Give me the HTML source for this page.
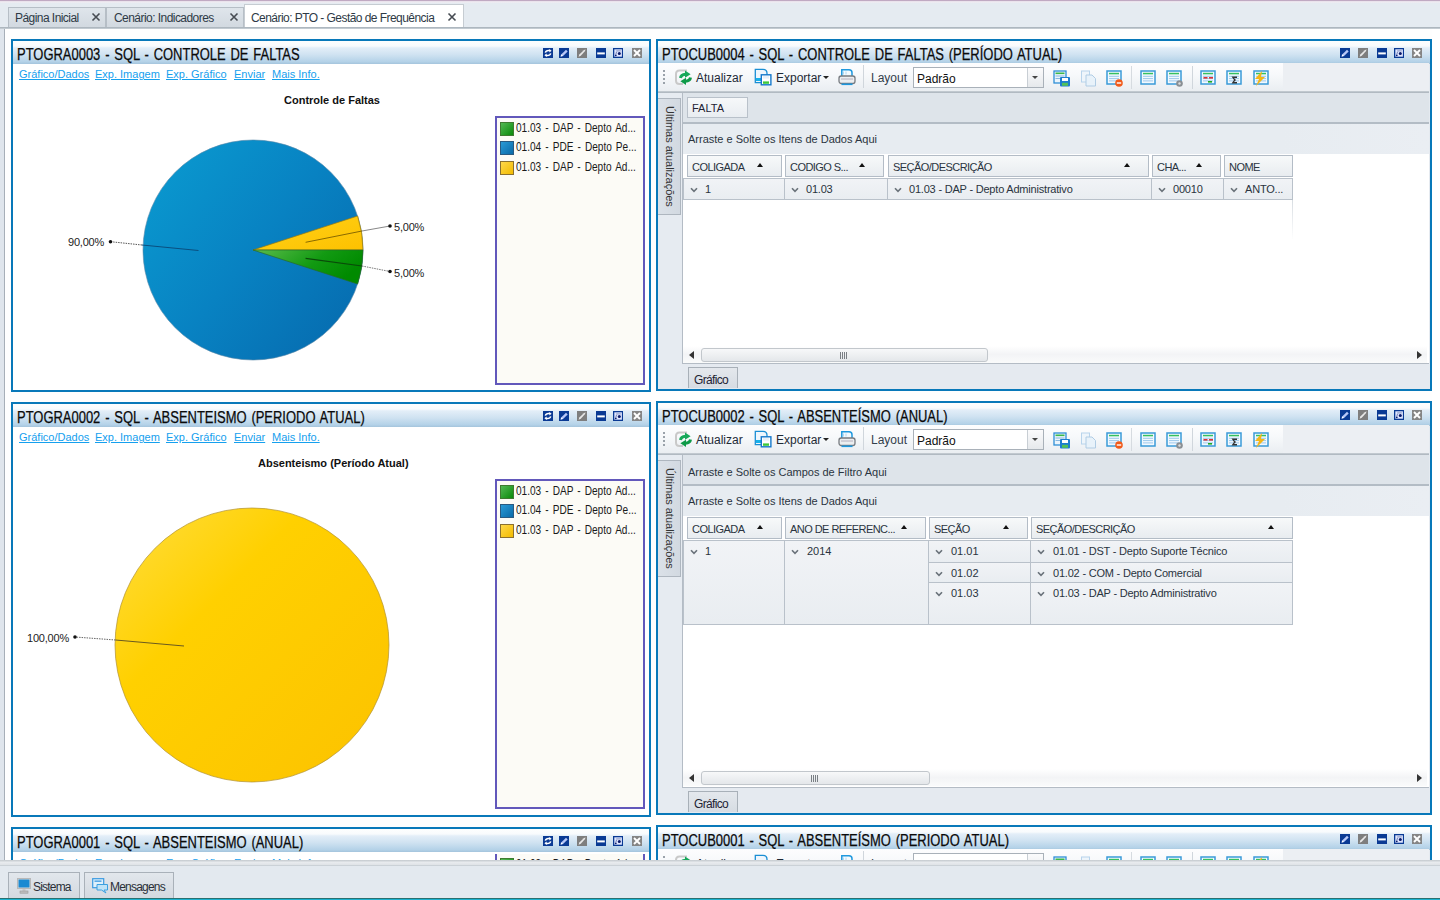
<!DOCTYPE html><html><head><meta charset="utf-8"><style>
*{margin:0;padding:0;box-sizing:border-box}
html,body{width:1440px;height:900px;overflow:hidden;background:#fff;font-family:"Liberation Sans",sans-serif;color:#222;position:relative}
.a{position:absolute}
.t{position:absolute;white-space:nowrap;line-height:1}
#topline{left:0;top:0;width:1440px;height:3px;background:linear-gradient(#c0a9c2 0,#c0a9c2 33%,#e9dfea 34%,#eef0f4 100%)}
#tabbar{left:0;top:3px;width:1440px;height:24px;background:#e5ebf1}
#tabline{left:0;top:27px;width:1440px;height:2px;background:linear-gradient(#a3adb6,#cdd4da)}
.tab{position:absolute;top:7px;height:20px;background:linear-gradient(#dfe5eb,#d2d9e0);border:1px solid #b6bec6;border-bottom:none}
.tabt{position:absolute;top:4px;font-size:12px;color:#2e3a46;letter-spacing:-0.55px;line-height:1;white-space:nowrap}
#lstrip{left:0;top:29px;width:5px;height:837px;background:#dfe5ec;border-right:1px solid #a7afb8}
#content{left:6px;top:29px;width:1426px;height:831px;background:#fefefe}
.pnl{position:absolute;border:2px solid #0878b9;background:#fff;overflow:hidden}
.ttl{position:absolute;left:0;top:0;right:0;height:23px;background:linear-gradient(#fdfefe 0%,#f8fbfd 22%,#e3eef8 30%,#cfe2f1 60%,#b4d2e8 90%,#a4c4dc 100%)}
.ttl .tx{position:absolute;left:4px;top:6px;font-size:16px;word-spacing:1.5px;transform:scaleX(0.81);transform-origin:0 0;color:#0a0a0a;-webkit-text-stroke:0.25px #0a0a0a;white-space:nowrap;line-height:1}
.lnk{position:absolute;font-size:11px;color:#15a0ee;text-decoration:underline;white-space:nowrap;line-height:1}
.lgt{position:absolute;font-size:12px;color:#1a1a1a;white-space:nowrap;line-height:1;word-spacing:1.5px;transform:scaleX(0.84);transform-origin:0 0}
.pct{position:absolute;font-size:11px;color:#222;white-space:nowrap;line-height:1;letter-spacing:-0.2px}
.ct{position:absolute;font-size:11px;font-weight:700;color:#111;white-space:nowrap;line-height:1}
#bline{left:0;top:860px;width:1440px;height:6px;background:linear-gradient(#c3c8cd,#e8ebee 40%,#dfe3e7 80%,#bdc5cc)}
#bbar{left:0;top:866px;width:1440px;height:32px;background:#e3e9ef}
#teal{left:0;top:898px;width:1440px;height:2px;background:linear-gradient(#2a7070 0,#2a7070 50%,#1cb2cf 50%)}
.btab{position:absolute;top:872px;height:26px;background:linear-gradient(#e2e7ec,#d3d9e0);border:1px solid #a9b1b9;border-bottom:none}
.btab .tt{position:absolute;top:8px;font-size:12px;color:#2a2f38;line-height:1;white-space:nowrap;letter-spacing:-0.8px}

.tbar{position:absolute;height:29px;background:linear-gradient(#fdfdfe 0%,#f7f9fb 40%,#e9edf1 100%)}
.tbt{position:absolute;font-size:12px;color:#1e2a36;white-space:nowrap;line-height:1}
.pvt{position:absolute;font-size:11px;color:#2a3440;white-space:nowrap;line-height:1}
.hcell{position:absolute;height:22px;border:1px solid #b3bcc6;background:linear-gradient(#f7f9fa,#e8ecf0)}
.rcell{position:absolute;border:1px solid #b9c1ca;background:linear-gradient(#f1f3f6,#e9edf1)}
.sarr{position:absolute;width:0;height:0;border-left:3.5px solid transparent;border-right:3.5px solid transparent;border-bottom:4px solid #111}
</style></head><body>
<div id="topline" class="a"></div><div id="tabbar" class="a"></div>
<div class="tab" style="left:8px;width:98px"><span class="tabt" style="left:6px">Página Inicial</span></div>
<div class="tab" style="left:106px;width:138px"><span class="tabt" style="left:7px">Cenário: Indicadores</span></div>
<div class="a" style="left:244px;top:4px;width:220px;height:25px;background:#fff;border:1px solid #c6ccd2;border-bottom:none"><span class="tabt" style="left:6px;top:7px">Cenário: PTO - Gestão de Frequência</span></div>
<svg class="a" style="left:91px;top:12px" width="10" height="10" viewBox="0 0 10 10"><path d="M1.5 1.5 L8.5 8.5 M8.5 1.5 L1.5 8.5" stroke="#464b52" stroke-width="1.6"/></svg><svg class="a" style="left:229px;top:12px" width="10" height="10" viewBox="0 0 10 10"><path d="M1.5 1.5 L8.5 8.5 M8.5 1.5 L1.5 8.5" stroke="#464b52" stroke-width="1.6"/></svg><svg class="a" style="left:447px;top:12px" width="10" height="10" viewBox="0 0 10 10"><path d="M1.5 1.5 L8.5 8.5 M8.5 1.5 L1.5 8.5" stroke="#464b52" stroke-width="1.6"/></svg>
<div id="tabline" class="a"></div><div id="lstrip" class="a"></div><div id="content" class="a"></div>
<div class="pnl" style="left:11px;top:39px;width:640px;height:353px"><div class="ttl"><span class="tx">PTOGRA0003 - SQL - CONTROLE DE FALTAS</span></div></div><svg class="a" style="left:543px;top:48px" width="10" height="10" viewBox="0 0 10 10"><rect x="0" y="0" width="10" height="10" fill="#0a3a94"/><path d="M2.3 4.6 Q3 2.3 5.6 2.4 L7.2 2.6" stroke="#fff" stroke-width="1.5" fill="none"/><path d="M6.2 1 L8.6 2.8 L6.4 4.4z" fill="#fff"/><path d="M7.7 5.4 Q7 7.7 4.4 7.6 L2.8 7.4" stroke="#fff" stroke-width="1.5" fill="none"/><path d="M3.8 9 L1.4 7.2 L3.6 5.6z" fill="#fff"/></svg><svg class="a" style="left:559px;top:48px" width="10" height="10" viewBox="0 0 10 10"><rect x="0" y="0" width="10" height="10" fill="#0a3a94"/><path d="M1.6 8.6 L2.2 6.4 L7 1.8 L8.7 3.4 L4 8z" fill="#b8c8f8"/><path d="M1.6 8.6 L2.2 6.4 L4 8z" fill="#fff"/></svg><svg class="a" style="left:577px;top:48px" width="10" height="10" viewBox="0 0 10 10"><rect x="0" y="0" width="10" height="10" fill="#7e7e7e"/><path d="M1.6 8.8 L2.3 6.6 L6.8 2.2 L8.2 1.4 L8.6 1.8 L7.8 3.2 L3.8 7.8z" fill="#e8e8e8"/></svg><svg class="a" style="left:596px;top:48px" width="10" height="10" viewBox="0 0 10 10"><rect x="0" y="0" width="10" height="10" fill="#0a3a94"/><rect x="1.2" y="4.4" width="7.6" height="2" fill="#fff"/></svg><svg class="a" style="left:613px;top:48px" width="10" height="10" viewBox="0 0 10 10"><rect x="0" y="0" width="10" height="10" fill="#0a3a94"/><rect x="1.3" y="1.3" width="7.6" height="7.4" fill="#dfe6ff"/><rect x="3.2" y="2.4" width="4.6" height="1" fill="#8a96c0"/><circle cx="6.3" cy="5.6" r="1.5" fill="#0a1a6a"/><circle cx="2.8" cy="7.3" r="0.9" fill="#0a1a6a"/><path d="M3.6 3.8 L2.8 6.4" stroke="#5a6aa0" stroke-width="0.8"/></svg><svg class="a" style="left:632px;top:48px" width="10" height="10" viewBox="0 0 10 10"><rect x="0" y="0" width="10" height="10" fill="#858585"/><path d="M2 2 L8 8 M8 2 L2 8" stroke="#fff" stroke-width="1.9"/></svg><span class="lnk" style="left:19px;top:69px">Gráfico/Dados</span><span class="lnk" style="left:95px;top:69px">Exp. Imagem</span><span class="lnk" style="left:166px;top:69px">Exp. Gráfico</span><span class="lnk" style="left:234px;top:69px">Enviar</span><span class="lnk" style="left:272px;top:69px">Mais Info.</span>
<div class="a" style="left:495px;top:116px;width:150px;height:269px;border:2px solid #6258bb;background:#fcfbf6"></div><div class="a" style="left:500px;top:122.0px;width:14px;height:14px;border:1px solid #3f7a30;background:linear-gradient(135deg,#53b853,#0a8a0a)"></div><span class="lgt" style="left:516px;top:122.0px">01.03 - DAP - Depto Ad...</span><div class="a" style="left:500px;top:141.3px;width:14px;height:14px;border:1px solid #2a5a80;background:linear-gradient(135deg,#2a9ad6,#0a6aa8)"></div><span class="lgt" style="left:516px;top:141.3px">01.04 - PDE - Depto Pe...</span><div class="a" style="left:500px;top:160.6px;width:14px;height:14px;border:1px solid #8a7030;background:linear-gradient(135deg,#ffd84a,#f2bb00)"></div><span class="lgt" style="left:516px;top:160.6px">01.03 - DAP - Depto Ad...</span>
<svg class="a" style="left:0;top:0" width="660" height="400" viewBox="0 0 660 400">
<defs>
<linearGradient id="gb" x1="0" y1="0.1" x2="1" y2="0.9"><stop offset="0" stop-color="#0a9ad0"/><stop offset="0.5" stop-color="#0882c2"/><stop offset="1" stop-color="#066aae"/></linearGradient>
<linearGradient id="gy" x1="0" y1="0" x2="1" y2="1"><stop offset="0" stop-color="#ffd21a"/><stop offset="1" stop-color="#fdc100"/></linearGradient>
<linearGradient id="gg" x1="0" y1="0" x2="1" y2="0.4"><stop offset="0" stop-color="#5cbc4c"/><stop offset="0.6" stop-color="#129a12"/><stop offset="1" stop-color="#008a00"/></linearGradient>
</defs>
<circle cx="253" cy="250" r="110" fill="url(#gb)" stroke="#5a88a8" stroke-width="0.6"/>
<path d="M253 250 L357.62 216.01 A110 110 0 0 1 363 250 Z" fill="url(#gy)" stroke="#9a7a10" stroke-width="0.7"/>
<path d="M253 250 L363 250 A110 110 0 0 1 357.62 283.99 Z" fill="url(#gg)" stroke="#2a6a2a" stroke-width="0.7"/>
<path d="M198.5 250.5 L142 245" stroke="#0a4f80" stroke-width="1"/>
<path d="M142 245 L110.5 241.7" stroke="#555" stroke-width="1" stroke-dasharray="1.5 1"/>
<circle cx="110.5" cy="241.7" r="1.8" fill="#111"/>
<path d="M305.6 242.3 L362 231" stroke="#8a6a00" stroke-width="1"/>
<path d="M362 231 L390 226" stroke="#888" stroke-width="1"/>
<circle cx="390" cy="226" r="1.8" fill="#111"/>
<path d="M305.6 258.4 L362 266" stroke="#0a4a0a" stroke-width="1.2"/>
<path d="M362 266 L390 271.5" stroke="#777" stroke-width="1" stroke-dasharray="1.5 1"/>
<circle cx="390" cy="271.5" r="1.8" fill="#111"/>
</svg><span class="pct" style="left:68px;top:237px">90,00%</span><span class="pct" style="left:394px;top:222px">5,00%</span><span class="pct" style="left:394px;top:268px">5,00%</span><span class="ct" style="left:284px;top:95px">Controle de Faltas</span>
<div class="pnl" style="left:11px;top:402px;width:640px;height:415px"><div class="ttl"><span class="tx">PTOGRA0002 - SQL - ABSENTEISMO (PERIODO ATUAL)</span></div></div><svg class="a" style="left:543px;top:411px" width="10" height="10" viewBox="0 0 10 10"><rect x="0" y="0" width="10" height="10" fill="#0a3a94"/><path d="M2.3 4.6 Q3 2.3 5.6 2.4 L7.2 2.6" stroke="#fff" stroke-width="1.5" fill="none"/><path d="M6.2 1 L8.6 2.8 L6.4 4.4z" fill="#fff"/><path d="M7.7 5.4 Q7 7.7 4.4 7.6 L2.8 7.4" stroke="#fff" stroke-width="1.5" fill="none"/><path d="M3.8 9 L1.4 7.2 L3.6 5.6z" fill="#fff"/></svg><svg class="a" style="left:559px;top:411px" width="10" height="10" viewBox="0 0 10 10"><rect x="0" y="0" width="10" height="10" fill="#0a3a94"/><path d="M1.6 8.6 L2.2 6.4 L7 1.8 L8.7 3.4 L4 8z" fill="#b8c8f8"/><path d="M1.6 8.6 L2.2 6.4 L4 8z" fill="#fff"/></svg><svg class="a" style="left:577px;top:411px" width="10" height="10" viewBox="0 0 10 10"><rect x="0" y="0" width="10" height="10" fill="#7e7e7e"/><path d="M1.6 8.8 L2.3 6.6 L6.8 2.2 L8.2 1.4 L8.6 1.8 L7.8 3.2 L3.8 7.8z" fill="#e8e8e8"/></svg><svg class="a" style="left:596px;top:411px" width="10" height="10" viewBox="0 0 10 10"><rect x="0" y="0" width="10" height="10" fill="#0a3a94"/><rect x="1.2" y="4.4" width="7.6" height="2" fill="#fff"/></svg><svg class="a" style="left:613px;top:411px" width="10" height="10" viewBox="0 0 10 10"><rect x="0" y="0" width="10" height="10" fill="#0a3a94"/><rect x="1.3" y="1.3" width="7.6" height="7.4" fill="#dfe6ff"/><rect x="3.2" y="2.4" width="4.6" height="1" fill="#8a96c0"/><circle cx="6.3" cy="5.6" r="1.5" fill="#0a1a6a"/><circle cx="2.8" cy="7.3" r="0.9" fill="#0a1a6a"/><path d="M3.6 3.8 L2.8 6.4" stroke="#5a6aa0" stroke-width="0.8"/></svg><svg class="a" style="left:632px;top:411px" width="10" height="10" viewBox="0 0 10 10"><rect x="0" y="0" width="10" height="10" fill="#858585"/><path d="M2 2 L8 8 M8 2 L2 8" stroke="#fff" stroke-width="1.9"/></svg><span class="lnk" style="left:19px;top:432px">Gráfico/Dados</span><span class="lnk" style="left:95px;top:432px">Exp. Imagem</span><span class="lnk" style="left:166px;top:432px">Exp. Gráfico</span><span class="lnk" style="left:234px;top:432px">Enviar</span><span class="lnk" style="left:272px;top:432px">Mais Info.</span>
<div class="a" style="left:495px;top:479px;width:150px;height:330px;border:2px solid #6258bb;background:#fcfbf6"></div><div class="a" style="left:500px;top:485.0px;width:14px;height:14px;border:1px solid #3f7a30;background:linear-gradient(135deg,#53b853,#0a8a0a)"></div><span class="lgt" style="left:516px;top:485.0px">01.03 - DAP - Depto Ad...</span><div class="a" style="left:500px;top:504.3px;width:14px;height:14px;border:1px solid #2a5a80;background:linear-gradient(135deg,#2a9ad6,#0a6aa8)"></div><span class="lgt" style="left:516px;top:504.3px">01.04 - PDE - Depto Pe...</span><div class="a" style="left:500px;top:523.6px;width:14px;height:14px;border:1px solid #8a7030;background:linear-gradient(135deg,#ffd84a,#f2bb00)"></div><span class="lgt" style="left:516px;top:523.6px">01.03 - DAP - Depto Ad...</span>
<svg class="a" style="left:0;top:400px" width="660" height="420" viewBox="0 400 660 420">
<defs>
<linearGradient id="gy2" x1="0" y1="0" x2="1" y2="1"><stop offset="0" stop-color="#ffde40"/><stop offset="0.35" stop-color="#ffd000"/><stop offset="1" stop-color="#fcc200"/></linearGradient>
</defs>
<circle cx="252" cy="645" r="137" fill="url(#gy2)" stroke="#b09030" stroke-width="0.7"/>
<path d="M184 646 L115.5 640" stroke="#6a5a20" stroke-width="1"/>
<path d="M115.5 640 L75 637" stroke="#666" stroke-width="1" stroke-dasharray="1.5 1"/>
<circle cx="75" cy="637" r="1.8" fill="#111"/>
</svg><span class="pct" style="left:27px;top:633px">100,00%</span><span class="ct" style="left:258px;top:458px">Absenteismo (Período Atual)</span>
<div class="pnl" style="left:656px;top:39px;width:776px;height:352px;background:#e5eaf0"><div class="ttl"><span class="tx">PTOCUB0004 - SQL - CONTROLE DE FALTAS (PERÍODO ATUAL)</span></div></div><svg class="a" style="left:1340px;top:48px" width="10" height="10" viewBox="0 0 10 10"><rect x="0" y="0" width="10" height="10" fill="#0a3a94"/><path d="M1.6 8.6 L2.2 6.4 L7 1.8 L8.7 3.4 L4 8z" fill="#b8c8f8"/><path d="M1.6 8.6 L2.2 6.4 L4 8z" fill="#fff"/></svg><svg class="a" style="left:1358px;top:48px" width="10" height="10" viewBox="0 0 10 10"><rect x="0" y="0" width="10" height="10" fill="#7e7e7e"/><path d="M1.6 8.8 L2.3 6.6 L6.8 2.2 L8.2 1.4 L8.6 1.8 L7.8 3.2 L3.8 7.8z" fill="#e8e8e8"/></svg><svg class="a" style="left:1377px;top:48px" width="10" height="10" viewBox="0 0 10 10"><rect x="0" y="0" width="10" height="10" fill="#0a3a94"/><rect x="1.2" y="4.4" width="7.6" height="2" fill="#fff"/></svg><svg class="a" style="left:1394px;top:48px" width="10" height="10" viewBox="0 0 10 10"><rect x="0" y="0" width="10" height="10" fill="#0a3a94"/><rect x="1.3" y="1.3" width="7.6" height="7.4" fill="#dfe6ff"/><rect x="3.2" y="2.4" width="4.6" height="1" fill="#8a96c0"/><circle cx="6.3" cy="5.6" r="1.5" fill="#0a1a6a"/><circle cx="2.8" cy="7.3" r="0.9" fill="#0a1a6a"/><path d="M3.6 3.8 L2.8 6.4" stroke="#5a6aa0" stroke-width="0.8"/></svg><svg class="a" style="left:1412px;top:48px" width="10" height="10" viewBox="0 0 10 10"><rect x="0" y="0" width="10" height="10" fill="#858585"/><path d="M2 2 L8 8 M8 2 L2 8" stroke="#fff" stroke-width="1.9"/></svg><div class="tbar" style="left:658px;top:63px;width:625px"></div><div class="a" style="left:1283px;top:63px;width:146px;height:29px;background:#eceff3"></div><div class="a" style="left:658px;top:91px;width:771px;height:2px;background:linear-gradient(#c9d0d6,#a9b2bb)"></div><div class="a" style="left:663px;top:70px;width:2px;height:2px;background:#9aa2aa"></div><div class="a" style="left:663px;top:74px;width:2px;height:2px;background:#9aa2aa"></div><div class="a" style="left:663px;top:78px;width:2px;height:2px;background:#9aa2aa"></div><div class="a" style="left:663px;top:82px;width:2px;height:2px;background:#9aa2aa"></div><svg class="a" style="left:674px;top:68px" width="19" height="19" viewBox="0 0 19 19"><path d="M13 2.5 H5.5 Q2 2.5 2 6 V12.5 Q2 16 5.5 16 H9" stroke="#c9c9c9" stroke-width="2" fill="none"/><path d="M6.5 10 Q7 6.5 11.5 6.2" stroke="#17a85a" stroke-width="3" fill="none"/><path d="M11 2.6 L16.6 6.2 L11 9.8z" fill="#17a85a"/><path d="M16.5 9.5 Q16 13 11.5 13.3" stroke="#0e9a48" stroke-width="3" fill="none"/><path d="M12 9.7 L6.4 13.3 L12 16.9z" fill="#0e9a48"/></svg><span class="tbt" style="left:696px;top:72px">Atualizar</span><svg class="a" style="left:754px;top:68px" width="18" height="18" viewBox="0 0 18 18"><path d="M1.3 1.3 H9 Q13 1.3 13 5.3 V14.7 H1.3z" fill="#eef6fd" stroke="#1a8ed4" stroke-width="1.3"/><rect x="2" y="10" width="5" height="3" fill="#16b0ea"/><rect x="7.3" y="6.8" width="9.6" height="10" fill="#fff" stroke="#1478cc" stroke-width="1.4"/><rect x="9" y="8" width="6" height="2.6" fill="#e8f0f8"/><rect x="9" y="13.4" width="6" height="2.4" fill="#3ec93a"/></svg><span class="tbt" style="left:776px;top:72px">Exportar</span><div class="a" style="left:823px;top:76px;width:0;height:0;border-left:3px solid transparent;border-right:3px solid transparent;border-top:3px solid #222"></div><svg class="a" style="left:838px;top:68px" width="18" height="18" viewBox="0 0 18 18"><path d="M3.8 8 V1.8 H11 Q14 1.8 14 4.8 V8" fill="#f4fafe" stroke="#1e98de" stroke-width="1.5"/><path d="M5.5 3.5 V6.5 M8 3.5 V6.5" stroke="#9fd0f0" stroke-width="0.8"/><rect x="1" y="8" width="16" height="7.5" rx="2.2" fill="#eceef0" stroke="#777b80" stroke-width="1.3"/><path d="M3 11 H15" stroke="#a8a0b0" stroke-width="0.8"/><path d="M3.5 16.3 H14.5" stroke="#1e98de" stroke-width="1.6"/></svg><div class="a" style="left:863px;top:65px;width:1px;height:23px;background:#d0d6dc"></div><span class="tbt" style="left:871px;top:72px;color:#33404c">Layout</span><div class="a" style="left:913px;top:67px;width:131px;height:21px;background:#fff;border:1px solid #a9b1b9"></div><div class="a" style="left:1027px;top:68px;width:16px;height:19px;background:linear-gradient(#fbfbfc,#e6e9ec);border-left:1px solid #c8ced4"></div><div class="a" style="left:1032px;top:76px;width:0;height:0;border-left:3.5px solid transparent;border-right:3.5px solid transparent;border-top:3.5px solid #444"></div><span class="tbt" style="left:917px;top:73px;color:#111">Padrão</span><svg class="a" style="left:1053px;top:70px" width="18" height="17" viewBox="0 0 18 17"><rect x="1" y="1" width="12" height="12" fill="#eaf4fc" stroke="#2f8fd6" stroke-width="1.3"/><rect x="2.5" y="2.5" width="9" height="1.6" fill="#3cb84a"/><path d="M2.5 6 H11.5 M2.5 8.5 H11.5" stroke="#7ab0dc" stroke-width="0.9"/><rect x="7" y="7" width="10" height="9.5" rx="1" fill="#1d7ed0"/><rect x="9" y="8" width="6" height="3" fill="#fff"/><rect x="9" y="12.8" width="6" height="3" fill="#52c05a"/></svg><svg class="a" style="left:1080px;top:70px" width="17" height="17" viewBox="0 0 17 17"><rect x="1.5" y="1" width="8" height="11" fill="#eef5fb" stroke="#b8d4ec" stroke-width="1"/><path d="M6 5 H12 L15.5 8.5 V16 H6z" fill="#e8f2fa" stroke="#b0cce4" stroke-width="1"/></svg><svg class="a" style="left:1106px;top:70px" width="17" height="17" viewBox="0 0 17 17"><rect x="1" y="1" width="14" height="13" fill="#f2f9fe" stroke="#3a9ad8" stroke-width="1.5"/><rect x="3" y="2.8" width="10" height="1.5" fill="#36c060"/><path d="M3 6.3 H13 M3 8.6 H13 M3 10.9 H13" stroke="#9cc8ec" stroke-width="1"/><circle cx="13" cy="13" r="3.8" fill="#f15a1a"/><rect x="10.8" y="12.3" width="4.4" height="1.4" fill="#fff"/></svg><div class="a" style="left:1131px;top:66px;width:1px;height:23px;background:#d6dbe0"></div><svg class="a" style="left:1140px;top:70px" width="17" height="17" viewBox="0 0 17 17"><rect x="1" y="1" width="14" height="13" fill="#f2f9fe" stroke="#3a9ad8" stroke-width="1.5"/><rect x="3" y="2.8" width="10" height="1.5" fill="#36c060"/><path d="M3 6.3 H13 M3 8.6 H13 M3 10.9 H13" stroke="#9cc8ec" stroke-width="1"/></svg><svg class="a" style="left:1166px;top:70px" width="17" height="17" viewBox="0 0 17 17"><rect x="1" y="1" width="14" height="13" fill="#f2f9fe" stroke="#3a9ad8" stroke-width="1.5"/><rect x="3" y="2.8" width="10" height="1.5" fill="#36c060"/><path d="M3 6.3 H13 M3 8.6 H13 M3 10.9 H13" stroke="#9cc8ec" stroke-width="1"/><circle cx="13.5" cy="13.5" r="3.3" fill="#8a8f94"/><circle cx="13.5" cy="13.5" r="1.2" fill="#ddd"/></svg><div class="a" style="left:1192px;top:66px;width:1px;height:23px;background:#d0d6dc"></div><svg class="a" style="left:1200px;top:70px" width="17" height="17" viewBox="0 0 17 17"><rect x="1" y="1" width="14" height="13" fill="#f2f9fe" stroke="#3a9ad8" stroke-width="1.5"/><rect x="3" y="2.8" width="10" height="1.5" fill="#36c060"/><path d="M3 6.3 H13 M3 8.6 H13 M3 10.9 H13" stroke="#9cc8ec" stroke-width="1"/><rect x="3.5" y="7" width="4" height="1.6" fill="#d33"/><rect x="9" y="7" width="4" height="1.6" fill="#d33"/><rect x="8" y="11" width="4" height="1.6" fill="#2a2"/></svg><svg class="a" style="left:1226px;top:70px" width="17" height="17" viewBox="0 0 17 17"><rect x="1" y="1" width="14" height="13" fill="#f2f9fe" stroke="#3a9ad8" stroke-width="1.5"/><rect x="3" y="2.8" width="10" height="1.5" fill="#36c060"/><path d="M3 6.3 H13 M3 8.6 H13 M3 10.9 H13" stroke="#9cc8ec" stroke-width="1"/><path d="M5.5 6.5 H11 V8 H8 L10 10 L8 12 H11 V13.5 H5.5 L8 10z" fill="#333"/></svg><svg class="a" style="left:1253px;top:70px" width="17" height="17" viewBox="0 0 17 17"><rect x="1" y="1" width="14" height="13" fill="#f2f9fe" stroke="#3a9ad8" stroke-width="1.5"/><rect x="3" y="2.8" width="10" height="1.5" fill="#36c060"/><path d="M3 6.3 H13 M3 8.6 H13 M3 10.9 H13" stroke="#9cc8ec" stroke-width="1"/><path d="M9 1 L2 9 H6 L3 16 L12 7 H8z" fill="#f5b616"/></svg><div class="a" style="left:658px;top:93px;width:24px;height:295px;background:#e6ebf1"></div><div class="a" style="left:658px;top:98px;width:23px;height:117px;background:linear-gradient(90deg,#dbe1e8,#d2d9e1);border:1px solid #aeb6bf;border-left:none"></div><span class="pvt" style="left:619px;top:151px;width:101px;transform:rotate(90deg);transform-origin:50% 50%;color:#333">Últimas atualizações</span><div class="a" style="left:682px;top:93px;width:747px;height:271px;background:#fff;border-left:1px solid #b4bcc5;border-bottom:1px solid #b4bcc5"></div><div class="a" style="left:683px;top:93px;width:746px;height:31px;background:#dee4ea;border-bottom:2px solid #b3bcc5"></div><div class="a" style="left:683px;top:124px;width:746px;height:30px;background:linear-gradient(90deg,#e7ecf1 80%,#eaeef3)"></div><div class="a" style="left:687px;top:97px;width:61px;height:21px;background:linear-gradient(#f6f8fa,#e9edf1);border:1px solid #b9c1ca"></div><span class="pvt" style="left:692px;top:103px;color:#223">FALTA</span><span class="pvt" style="left:688px;top:134px">Arraste e Solte os Itens de Dados Aqui</span><div class="hcell" style="left:687px;top:155px;width:95px"></div><span class="pvt" style="left:692px;top:162px;letter-spacing:-0.55px">COLIGADA</span><div class="sarr" style="left:757px;top:163px"></div><div class="hcell" style="left:785px;top:155px;width:99px"></div><span class="pvt" style="left:790px;top:162px;letter-spacing:-0.55px">CODIGO S...</span><div class="sarr" style="left:859px;top:163px"></div><div class="hcell" style="left:888px;top:155px;width:261px"></div><span class="pvt" style="left:893px;top:162px;letter-spacing:-0.55px">SEÇÃO/DESCRIÇÃO</span><div class="sarr" style="left:1124px;top:163px"></div><div class="hcell" style="left:1152px;top:155px;width:69px"></div><span class="pvt" style="left:1157px;top:162px;letter-spacing:-0.55px">CHA...</span><div class="sarr" style="left:1196px;top:163px"></div><div class="hcell" style="left:1224px;top:155px;width:69px"></div><span class="pvt" style="left:1229px;top:162px;letter-spacing:-0.55px">NOME</span><div class="rcell" style="left:683px;top:178px;width:102px;height:22px"></div><svg class="a" style="left:690px;top:187px" width="8" height="6" viewBox="0 0 8 6"><path d="M1 1.2 L4 4.4 L7 1.2" stroke="#6a727a" stroke-width="1.6" fill="none"/></svg><span class="pvt" style="left:705px;top:184px;letter-spacing:-0.2px">1</span><div class="rcell" style="left:784px;top:178px;width:104px;height:22px"></div><svg class="a" style="left:791px;top:187px" width="8" height="6" viewBox="0 0 8 6"><path d="M1 1.2 L4 4.4 L7 1.2" stroke="#6a727a" stroke-width="1.6" fill="none"/></svg><span class="pvt" style="left:806px;top:184px;letter-spacing:-0.2px">01.03</span><div class="rcell" style="left:887px;top:178px;width:265px;height:22px"></div><svg class="a" style="left:894px;top:187px" width="8" height="6" viewBox="0 0 8 6"><path d="M1 1.2 L4 4.4 L7 1.2" stroke="#6a727a" stroke-width="1.6" fill="none"/></svg><span class="pvt" style="left:909px;top:184px;letter-spacing:-0.2px">01.03 - DAP - Depto Administrativo</span><div class="rcell" style="left:1151px;top:178px;width:73px;height:22px"></div><svg class="a" style="left:1158px;top:187px" width="8" height="6" viewBox="0 0 8 6"><path d="M1 1.2 L4 4.4 L7 1.2" stroke="#6a727a" stroke-width="1.6" fill="none"/></svg><span class="pvt" style="left:1173px;top:184px;letter-spacing:-0.2px">00010</span><div class="rcell" style="left:1223px;top:178px;width:70px;height:22px"></div><svg class="a" style="left:1230px;top:187px" width="8" height="6" viewBox="0 0 8 6"><path d="M1 1.2 L4 4.4 L7 1.2" stroke="#6a727a" stroke-width="1.6" fill="none"/></svg><span class="pvt" style="left:1245px;top:184px;letter-spacing:-0.2px">ANTO...</span><div class="a" style="left:1292px;top:200px;width:1px;height:40px;background:linear-gradient(#d8dde2,#fff)"></div><div class="a" style="left:683px;top:346px;width:744px;height:17px;background:linear-gradient(#fff,#f3f4f6 50%,#fafbfb)"></div><div class="a" style="left:689px;top:351px;width:0;height:0;border-top:4px solid transparent;border-bottom:4px solid transparent;border-right:5px solid #333"></div><div class="a" style="left:1417px;top:351px;width:0;height:0;border-top:4px solid transparent;border-bottom:4px solid transparent;border-left:5px solid #333"></div><div class="a" style="left:701px;top:348px;width:287px;height:14px;border:1px solid #c2c7cc;border-radius:3px;background:linear-gradient(#f7f8f9,#e4e7ea)"></div><div class="a" style="left:840px;top:352px;width:1px;height:7px;background:#7a7f84"></div><div class="a" style="left:842px;top:352px;width:1px;height:7px;background:#7a7f84"></div><div class="a" style="left:844px;top:352px;width:1px;height:7px;background:#7a7f84"></div><div class="a" style="left:846px;top:352px;width:1px;height:7px;background:#7a7f84"></div><div class="a" style="left:688px;top:367px;width:50px;height:21px;background:linear-gradient(#e4e8ed,#d6dce3);border:1px solid #a8b0b8;border-bottom:none"></div><span class="pvt" style="left:694px;top:374px;font-size:12px;color:#223;letter-spacing:-0.65px">Gráfico</span>
<div class="pnl" style="left:656px;top:401px;width:776px;height:414px;background:#e5eaf0"><div class="ttl"><span class="tx">PTOCUB0002 - SQL - ABSENTEÍSMO (ANUAL)</span></div></div><svg class="a" style="left:1340px;top:410px" width="10" height="10" viewBox="0 0 10 10"><rect x="0" y="0" width="10" height="10" fill="#0a3a94"/><path d="M1.6 8.6 L2.2 6.4 L7 1.8 L8.7 3.4 L4 8z" fill="#b8c8f8"/><path d="M1.6 8.6 L2.2 6.4 L4 8z" fill="#fff"/></svg><svg class="a" style="left:1358px;top:410px" width="10" height="10" viewBox="0 0 10 10"><rect x="0" y="0" width="10" height="10" fill="#7e7e7e"/><path d="M1.6 8.8 L2.3 6.6 L6.8 2.2 L8.2 1.4 L8.6 1.8 L7.8 3.2 L3.8 7.8z" fill="#e8e8e8"/></svg><svg class="a" style="left:1377px;top:410px" width="10" height="10" viewBox="0 0 10 10"><rect x="0" y="0" width="10" height="10" fill="#0a3a94"/><rect x="1.2" y="4.4" width="7.6" height="2" fill="#fff"/></svg><svg class="a" style="left:1394px;top:410px" width="10" height="10" viewBox="0 0 10 10"><rect x="0" y="0" width="10" height="10" fill="#0a3a94"/><rect x="1.3" y="1.3" width="7.6" height="7.4" fill="#dfe6ff"/><rect x="3.2" y="2.4" width="4.6" height="1" fill="#8a96c0"/><circle cx="6.3" cy="5.6" r="1.5" fill="#0a1a6a"/><circle cx="2.8" cy="7.3" r="0.9" fill="#0a1a6a"/><path d="M3.6 3.8 L2.8 6.4" stroke="#5a6aa0" stroke-width="0.8"/></svg><svg class="a" style="left:1412px;top:410px" width="10" height="10" viewBox="0 0 10 10"><rect x="0" y="0" width="10" height="10" fill="#858585"/><path d="M2 2 L8 8 M8 2 L2 8" stroke="#fff" stroke-width="1.9"/></svg><div class="tbar" style="left:658px;top:425px;width:625px"></div><div class="a" style="left:1283px;top:425px;width:146px;height:29px;background:#eceff3"></div><div class="a" style="left:658px;top:453px;width:771px;height:2px;background:linear-gradient(#c9d0d6,#a9b2bb)"></div><div class="a" style="left:663px;top:432px;width:2px;height:2px;background:#9aa2aa"></div><div class="a" style="left:663px;top:436px;width:2px;height:2px;background:#9aa2aa"></div><div class="a" style="left:663px;top:440px;width:2px;height:2px;background:#9aa2aa"></div><div class="a" style="left:663px;top:444px;width:2px;height:2px;background:#9aa2aa"></div><svg class="a" style="left:674px;top:430px" width="19" height="19" viewBox="0 0 19 19"><path d="M13 2.5 H5.5 Q2 2.5 2 6 V12.5 Q2 16 5.5 16 H9" stroke="#c9c9c9" stroke-width="2" fill="none"/><path d="M6.5 10 Q7 6.5 11.5 6.2" stroke="#17a85a" stroke-width="3" fill="none"/><path d="M11 2.6 L16.6 6.2 L11 9.8z" fill="#17a85a"/><path d="M16.5 9.5 Q16 13 11.5 13.3" stroke="#0e9a48" stroke-width="3" fill="none"/><path d="M12 9.7 L6.4 13.3 L12 16.9z" fill="#0e9a48"/></svg><span class="tbt" style="left:696px;top:434px">Atualizar</span><svg class="a" style="left:754px;top:430px" width="18" height="18" viewBox="0 0 18 18"><path d="M1.3 1.3 H9 Q13 1.3 13 5.3 V14.7 H1.3z" fill="#eef6fd" stroke="#1a8ed4" stroke-width="1.3"/><rect x="2" y="10" width="5" height="3" fill="#16b0ea"/><rect x="7.3" y="6.8" width="9.6" height="10" fill="#fff" stroke="#1478cc" stroke-width="1.4"/><rect x="9" y="8" width="6" height="2.6" fill="#e8f0f8"/><rect x="9" y="13.4" width="6" height="2.4" fill="#3ec93a"/></svg><span class="tbt" style="left:776px;top:434px">Exportar</span><div class="a" style="left:823px;top:438px;width:0;height:0;border-left:3px solid transparent;border-right:3px solid transparent;border-top:3px solid #222"></div><svg class="a" style="left:838px;top:430px" width="18" height="18" viewBox="0 0 18 18"><path d="M3.8 8 V1.8 H11 Q14 1.8 14 4.8 V8" fill="#f4fafe" stroke="#1e98de" stroke-width="1.5"/><path d="M5.5 3.5 V6.5 M8 3.5 V6.5" stroke="#9fd0f0" stroke-width="0.8"/><rect x="1" y="8" width="16" height="7.5" rx="2.2" fill="#eceef0" stroke="#777b80" stroke-width="1.3"/><path d="M3 11 H15" stroke="#a8a0b0" stroke-width="0.8"/><path d="M3.5 16.3 H14.5" stroke="#1e98de" stroke-width="1.6"/></svg><div class="a" style="left:863px;top:427px;width:1px;height:23px;background:#d0d6dc"></div><span class="tbt" style="left:871px;top:434px;color:#33404c">Layout</span><div class="a" style="left:913px;top:429px;width:131px;height:21px;background:#fff;border:1px solid #a9b1b9"></div><div class="a" style="left:1027px;top:430px;width:16px;height:19px;background:linear-gradient(#fbfbfc,#e6e9ec);border-left:1px solid #c8ced4"></div><div class="a" style="left:1032px;top:438px;width:0;height:0;border-left:3.5px solid transparent;border-right:3.5px solid transparent;border-top:3.5px solid #444"></div><span class="tbt" style="left:917px;top:435px;color:#111">Padrão</span><svg class="a" style="left:1053px;top:432px" width="18" height="17" viewBox="0 0 18 17"><rect x="1" y="1" width="12" height="12" fill="#eaf4fc" stroke="#2f8fd6" stroke-width="1.3"/><rect x="2.5" y="2.5" width="9" height="1.6" fill="#3cb84a"/><path d="M2.5 6 H11.5 M2.5 8.5 H11.5" stroke="#7ab0dc" stroke-width="0.9"/><rect x="7" y="7" width="10" height="9.5" rx="1" fill="#1d7ed0"/><rect x="9" y="8" width="6" height="3" fill="#fff"/><rect x="9" y="12.8" width="6" height="3" fill="#52c05a"/></svg><svg class="a" style="left:1080px;top:432px" width="17" height="17" viewBox="0 0 17 17"><rect x="1.5" y="1" width="8" height="11" fill="#eef5fb" stroke="#b8d4ec" stroke-width="1"/><path d="M6 5 H12 L15.5 8.5 V16 H6z" fill="#e8f2fa" stroke="#b0cce4" stroke-width="1"/></svg><svg class="a" style="left:1106px;top:432px" width="17" height="17" viewBox="0 0 17 17"><rect x="1" y="1" width="14" height="13" fill="#f2f9fe" stroke="#3a9ad8" stroke-width="1.5"/><rect x="3" y="2.8" width="10" height="1.5" fill="#36c060"/><path d="M3 6.3 H13 M3 8.6 H13 M3 10.9 H13" stroke="#9cc8ec" stroke-width="1"/><circle cx="13" cy="13" r="3.8" fill="#f15a1a"/><rect x="10.8" y="12.3" width="4.4" height="1.4" fill="#fff"/></svg><div class="a" style="left:1131px;top:428px;width:1px;height:23px;background:#d6dbe0"></div><svg class="a" style="left:1140px;top:432px" width="17" height="17" viewBox="0 0 17 17"><rect x="1" y="1" width="14" height="13" fill="#f2f9fe" stroke="#3a9ad8" stroke-width="1.5"/><rect x="3" y="2.8" width="10" height="1.5" fill="#36c060"/><path d="M3 6.3 H13 M3 8.6 H13 M3 10.9 H13" stroke="#9cc8ec" stroke-width="1"/></svg><svg class="a" style="left:1166px;top:432px" width="17" height="17" viewBox="0 0 17 17"><rect x="1" y="1" width="14" height="13" fill="#f2f9fe" stroke="#3a9ad8" stroke-width="1.5"/><rect x="3" y="2.8" width="10" height="1.5" fill="#36c060"/><path d="M3 6.3 H13 M3 8.6 H13 M3 10.9 H13" stroke="#9cc8ec" stroke-width="1"/><circle cx="13.5" cy="13.5" r="3.3" fill="#8a8f94"/><circle cx="13.5" cy="13.5" r="1.2" fill="#ddd"/></svg><div class="a" style="left:1192px;top:428px;width:1px;height:23px;background:#d0d6dc"></div><svg class="a" style="left:1200px;top:432px" width="17" height="17" viewBox="0 0 17 17"><rect x="1" y="1" width="14" height="13" fill="#f2f9fe" stroke="#3a9ad8" stroke-width="1.5"/><rect x="3" y="2.8" width="10" height="1.5" fill="#36c060"/><path d="M3 6.3 H13 M3 8.6 H13 M3 10.9 H13" stroke="#9cc8ec" stroke-width="1"/><rect x="3.5" y="7" width="4" height="1.6" fill="#d33"/><rect x="9" y="7" width="4" height="1.6" fill="#d33"/><rect x="8" y="11" width="4" height="1.6" fill="#2a2"/></svg><svg class="a" style="left:1226px;top:432px" width="17" height="17" viewBox="0 0 17 17"><rect x="1" y="1" width="14" height="13" fill="#f2f9fe" stroke="#3a9ad8" stroke-width="1.5"/><rect x="3" y="2.8" width="10" height="1.5" fill="#36c060"/><path d="M3 6.3 H13 M3 8.6 H13 M3 10.9 H13" stroke="#9cc8ec" stroke-width="1"/><path d="M5.5 6.5 H11 V8 H8 L10 10 L8 12 H11 V13.5 H5.5 L8 10z" fill="#333"/></svg><svg class="a" style="left:1253px;top:432px" width="17" height="17" viewBox="0 0 17 17"><rect x="1" y="1" width="14" height="13" fill="#f2f9fe" stroke="#3a9ad8" stroke-width="1.5"/><rect x="3" y="2.8" width="10" height="1.5" fill="#36c060"/><path d="M3 6.3 H13 M3 8.6 H13 M3 10.9 H13" stroke="#9cc8ec" stroke-width="1"/><path d="M9 1 L2 9 H6 L3 16 L12 7 H8z" fill="#f5b616"/></svg><div class="a" style="left:658px;top:455px;width:24px;height:357px;background:#e6ebf1"></div><div class="a" style="left:658px;top:460px;width:23px;height:117px;background:linear-gradient(90deg,#dbe1e8,#d2d9e1);border:1px solid #aeb6bf;border-left:none"></div><span class="pvt" style="left:619px;top:513px;width:101px;transform:rotate(90deg);transform-origin:50% 50%;color:#333">Últimas atualizações</span><div class="a" style="left:682px;top:455px;width:747px;height:333px;background:#fff;border-left:1px solid #b4bcc5;border-bottom:1px solid #b4bcc5"></div><div class="a" style="left:683px;top:455px;width:746px;height:31px;background:#dee4ea;border-bottom:2px solid #b3bcc5"></div><div class="a" style="left:683px;top:486px;width:746px;height:30px;background:linear-gradient(90deg,#e7ecf1 80%,#eaeef3)"></div><span class="pvt" style="left:688px;top:467px">Arraste e Solte os Campos de Filtro Aqui</span><span class="pvt" style="left:688px;top:496px">Arraste e Solte os Itens de Dados Aqui</span><div class="hcell" style="left:687px;top:517px;width:95px"></div><span class="pvt" style="left:692px;top:524px;letter-spacing:-0.55px">COLIGADA</span><div class="sarr" style="left:757px;top:525px"></div><div class="hcell" style="left:785px;top:517px;width:141px"></div><span class="pvt" style="left:790px;top:524px;letter-spacing:-0.55px">ANO DE REFERENC...</span><div class="sarr" style="left:901px;top:525px"></div><div class="hcell" style="left:929px;top:517px;width:99px"></div><span class="pvt" style="left:934px;top:524px;letter-spacing:-0.55px">SEÇÃO</span><div class="sarr" style="left:1003px;top:525px"></div><div class="hcell" style="left:1031px;top:517px;width:262px"></div><span class="pvt" style="left:1036px;top:524px;letter-spacing:-0.55px">SEÇÃO/DESCRIÇÃO</span><div class="sarr" style="left:1268px;top:525px"></div><div class="rcell" style="left:683px;top:540px;width:102px;height:85px"></div><svg class="a" style="left:690px;top:549px" width="8" height="6" viewBox="0 0 8 6"><path d="M1 1.2 L4 4.4 L7 1.2" stroke="#6a727a" stroke-width="1.6" fill="none"/></svg><span class="pvt" style="left:705px;top:546px">1</span><div class="rcell" style="left:784px;top:540px;width:145px;height:85px"></div><svg class="a" style="left:791px;top:549px" width="8" height="6" viewBox="0 0 8 6"><path d="M1 1.2 L4 4.4 L7 1.2" stroke="#6a727a" stroke-width="1.6" fill="none"/></svg><span class="pvt" style="left:807px;top:546px">2014</span><div class="rcell" style="left:928px;top:540px;width:103px;height:23px"></div><div class="rcell" style="left:1030px;top:540px;width:263px;height:23px"></div><svg class="a" style="left:935px;top:549px" width="8" height="6" viewBox="0 0 8 6"><path d="M1 1.2 L4 4.4 L7 1.2" stroke="#6a727a" stroke-width="1.6" fill="none"/></svg><span class="pvt" style="left:951px;top:546px">01.01</span><svg class="a" style="left:1037px;top:549px" width="8" height="6" viewBox="0 0 8 6"><path d="M1 1.2 L4 4.4 L7 1.2" stroke="#6a727a" stroke-width="1.6" fill="none"/></svg><span class="pvt" style="left:1053px;top:546px;letter-spacing:-0.2px">01.01 - DST - Depto Suporte Técnico</span><div class="rcell" style="left:928px;top:562px;width:103px;height:21px"></div><div class="rcell" style="left:1030px;top:562px;width:263px;height:21px"></div><svg class="a" style="left:935px;top:571px" width="8" height="6" viewBox="0 0 8 6"><path d="M1 1.2 L4 4.4 L7 1.2" stroke="#6a727a" stroke-width="1.6" fill="none"/></svg><span class="pvt" style="left:951px;top:568px">01.02</span><svg class="a" style="left:1037px;top:571px" width="8" height="6" viewBox="0 0 8 6"><path d="M1 1.2 L4 4.4 L7 1.2" stroke="#6a727a" stroke-width="1.6" fill="none"/></svg><span class="pvt" style="left:1053px;top:568px;letter-spacing:-0.2px">01.02 - COM - Depto Comercial</span><div class="rcell" style="left:928px;top:582px;width:103px;height:43px"></div><div class="rcell" style="left:1030px;top:582px;width:263px;height:43px"></div><svg class="a" style="left:935px;top:591px" width="8" height="6" viewBox="0 0 8 6"><path d="M1 1.2 L4 4.4 L7 1.2" stroke="#6a727a" stroke-width="1.6" fill="none"/></svg><span class="pvt" style="left:951px;top:588px">01.03</span><svg class="a" style="left:1037px;top:591px" width="8" height="6" viewBox="0 0 8 6"><path d="M1 1.2 L4 4.4 L7 1.2" stroke="#6a727a" stroke-width="1.6" fill="none"/></svg><span class="pvt" style="left:1053px;top:588px;letter-spacing:-0.2px">01.03 - DAP - Depto Administrativo</span><div class="a" style="left:683px;top:769px;width:744px;height:17px;background:linear-gradient(#fff,#f3f4f6 50%,#fafbfb)"></div><div class="a" style="left:689px;top:774px;width:0;height:0;border-top:4px solid transparent;border-bottom:4px solid transparent;border-right:5px solid #333"></div><div class="a" style="left:1417px;top:774px;width:0;height:0;border-top:4px solid transparent;border-bottom:4px solid transparent;border-left:5px solid #333"></div><div class="a" style="left:701px;top:771px;width:229px;height:14px;border:1px solid #c2c7cc;border-radius:3px;background:linear-gradient(#f7f8f9,#e4e7ea)"></div><div class="a" style="left:811px;top:775px;width:1px;height:7px;background:#7a7f84"></div><div class="a" style="left:813px;top:775px;width:1px;height:7px;background:#7a7f84"></div><div class="a" style="left:815px;top:775px;width:1px;height:7px;background:#7a7f84"></div><div class="a" style="left:817px;top:775px;width:1px;height:7px;background:#7a7f84"></div><div class="a" style="left:688px;top:791px;width:50px;height:21px;background:linear-gradient(#e4e8ed,#d6dce3);border:1px solid #a8b0b8;border-bottom:none"></div><span class="pvt" style="left:694px;top:798px;font-size:12px;color:#223;letter-spacing:-0.65px">Gráfico</span>
<div class="pnl" style="left:11px;top:827px;width:640px;height:60px"><div class="ttl"><span class="tx">PTOGRA0001 - SQL - ABSENTEISMO (ANUAL)</span></div></div><svg class="a" style="left:543px;top:836px" width="10" height="10" viewBox="0 0 10 10"><rect x="0" y="0" width="10" height="10" fill="#0a3a94"/><path d="M2.3 4.6 Q3 2.3 5.6 2.4 L7.2 2.6" stroke="#fff" stroke-width="1.5" fill="none"/><path d="M6.2 1 L8.6 2.8 L6.4 4.4z" fill="#fff"/><path d="M7.7 5.4 Q7 7.7 4.4 7.6 L2.8 7.4" stroke="#fff" stroke-width="1.5" fill="none"/><path d="M3.8 9 L1.4 7.2 L3.6 5.6z" fill="#fff"/></svg><svg class="a" style="left:559px;top:836px" width="10" height="10" viewBox="0 0 10 10"><rect x="0" y="0" width="10" height="10" fill="#0a3a94"/><path d="M1.6 8.6 L2.2 6.4 L7 1.8 L8.7 3.4 L4 8z" fill="#b8c8f8"/><path d="M1.6 8.6 L2.2 6.4 L4 8z" fill="#fff"/></svg><svg class="a" style="left:577px;top:836px" width="10" height="10" viewBox="0 0 10 10"><rect x="0" y="0" width="10" height="10" fill="#7e7e7e"/><path d="M1.6 8.8 L2.3 6.6 L6.8 2.2 L8.2 1.4 L8.6 1.8 L7.8 3.2 L3.8 7.8z" fill="#e8e8e8"/></svg><svg class="a" style="left:596px;top:836px" width="10" height="10" viewBox="0 0 10 10"><rect x="0" y="0" width="10" height="10" fill="#0a3a94"/><rect x="1.2" y="4.4" width="7.6" height="2" fill="#fff"/></svg><svg class="a" style="left:613px;top:836px" width="10" height="10" viewBox="0 0 10 10"><rect x="0" y="0" width="10" height="10" fill="#0a3a94"/><rect x="1.3" y="1.3" width="7.6" height="7.4" fill="#dfe6ff"/><rect x="3.2" y="2.4" width="4.6" height="1" fill="#8a96c0"/><circle cx="6.3" cy="5.6" r="1.5" fill="#0a1a6a"/><circle cx="2.8" cy="7.3" r="0.9" fill="#0a1a6a"/><path d="M3.6 3.8 L2.8 6.4" stroke="#5a6aa0" stroke-width="0.8"/></svg><svg class="a" style="left:632px;top:836px" width="10" height="10" viewBox="0 0 10 10"><rect x="0" y="0" width="10" height="10" fill="#858585"/><path d="M2 2 L8 8 M8 2 L2 8" stroke="#fff" stroke-width="1.9"/></svg><span class="lnk" style="left:19px;top:858px">Gráfico/Dados</span><span class="lnk" style="left:95px;top:858px">Exp. Imagem</span><span class="lnk" style="left:166px;top:858px">Exp. Gráfico</span><span class="lnk" style="left:234px;top:858px">Enviar</span><span class="lnk" style="left:272px;top:858px">Mais Info.</span>
<div class="a" style="left:0;top:854px;width:660px;height:6px;overflow:hidden"><div style="position:absolute;left:0;top:-854px"><div class="a" style="left:495px;top:852px;width:150px;height:48px;border:2px solid #6258bb;background:#fcfbf6"></div><div class="a" style="left:500px;top:858.0px;width:14px;height:14px;border:1px solid #3f7a30;background:linear-gradient(135deg,#53b853,#0a8a0a)"></div><span class="lgt" style="left:516px;top:858.0px">01.03 - DAP - Depto Ad...</span><div class="a" style="left:500px;top:877.3px;width:14px;height:14px;border:1px solid #2a5a80;background:linear-gradient(135deg,#2a9ad6,#0a6aa8)"></div><span class="lgt" style="left:516px;top:877.3px">01.04 - PDE - Depto Pe...</span><div class="a" style="left:500px;top:896.6px;width:14px;height:14px;border:1px solid #8a7030;background:linear-gradient(135deg,#ffd84a,#f2bb00)"></div><span class="lgt" style="left:516px;top:896.6px">01.03 - DAP - Depto Ad...</span></div></div>
<div class="pnl" style="left:656px;top:825px;width:776px;height:60px;background:#e5eaf0"><div class="ttl"><span class="tx">PTOCUB0001 - SQL - ABSENTEÍSMO (PERIODO ATUAL)</span></div></div><svg class="a" style="left:1340px;top:834px" width="10" height="10" viewBox="0 0 10 10"><rect x="0" y="0" width="10" height="10" fill="#0a3a94"/><path d="M1.6 8.6 L2.2 6.4 L7 1.8 L8.7 3.4 L4 8z" fill="#b8c8f8"/><path d="M1.6 8.6 L2.2 6.4 L4 8z" fill="#fff"/></svg><svg class="a" style="left:1358px;top:834px" width="10" height="10" viewBox="0 0 10 10"><rect x="0" y="0" width="10" height="10" fill="#7e7e7e"/><path d="M1.6 8.8 L2.3 6.6 L6.8 2.2 L8.2 1.4 L8.6 1.8 L7.8 3.2 L3.8 7.8z" fill="#e8e8e8"/></svg><svg class="a" style="left:1377px;top:834px" width="10" height="10" viewBox="0 0 10 10"><rect x="0" y="0" width="10" height="10" fill="#0a3a94"/><rect x="1.2" y="4.4" width="7.6" height="2" fill="#fff"/></svg><svg class="a" style="left:1394px;top:834px" width="10" height="10" viewBox="0 0 10 10"><rect x="0" y="0" width="10" height="10" fill="#0a3a94"/><rect x="1.3" y="1.3" width="7.6" height="7.4" fill="#dfe6ff"/><rect x="3.2" y="2.4" width="4.6" height="1" fill="#8a96c0"/><circle cx="6.3" cy="5.6" r="1.5" fill="#0a1a6a"/><circle cx="2.8" cy="7.3" r="0.9" fill="#0a1a6a"/><path d="M3.6 3.8 L2.8 6.4" stroke="#5a6aa0" stroke-width="0.8"/></svg><svg class="a" style="left:1412px;top:834px" width="10" height="10" viewBox="0 0 10 10"><rect x="0" y="0" width="10" height="10" fill="#858585"/><path d="M2 2 L8 8 M8 2 L2 8" stroke="#fff" stroke-width="1.9"/></svg><div class="tbar" style="left:658px;top:849px;width:625px"></div><div class="a" style="left:1283px;top:849px;width:146px;height:29px;background:#eceff3"></div><div class="a" style="left:658px;top:877px;width:771px;height:2px;background:linear-gradient(#c9d0d6,#a9b2bb)"></div><div class="a" style="left:663px;top:856px;width:2px;height:2px;background:#9aa2aa"></div><div class="a" style="left:663px;top:860px;width:2px;height:2px;background:#9aa2aa"></div><div class="a" style="left:663px;top:864px;width:2px;height:2px;background:#9aa2aa"></div><div class="a" style="left:663px;top:868px;width:2px;height:2px;background:#9aa2aa"></div><svg class="a" style="left:674px;top:854px" width="19" height="19" viewBox="0 0 19 19"><path d="M13 2.5 H5.5 Q2 2.5 2 6 V12.5 Q2 16 5.5 16 H9" stroke="#c9c9c9" stroke-width="2" fill="none"/><path d="M6.5 10 Q7 6.5 11.5 6.2" stroke="#17a85a" stroke-width="3" fill="none"/><path d="M11 2.6 L16.6 6.2 L11 9.8z" fill="#17a85a"/><path d="M16.5 9.5 Q16 13 11.5 13.3" stroke="#0e9a48" stroke-width="3" fill="none"/><path d="M12 9.7 L6.4 13.3 L12 16.9z" fill="#0e9a48"/></svg><span class="tbt" style="left:696px;top:858px">Atualizar</span><svg class="a" style="left:754px;top:854px" width="18" height="18" viewBox="0 0 18 18"><path d="M1.3 1.3 H9 Q13 1.3 13 5.3 V14.7 H1.3z" fill="#eef6fd" stroke="#1a8ed4" stroke-width="1.3"/><rect x="2" y="10" width="5" height="3" fill="#16b0ea"/><rect x="7.3" y="6.8" width="9.6" height="10" fill="#fff" stroke="#1478cc" stroke-width="1.4"/><rect x="9" y="8" width="6" height="2.6" fill="#e8f0f8"/><rect x="9" y="13.4" width="6" height="2.4" fill="#3ec93a"/></svg><span class="tbt" style="left:776px;top:858px">Exportar</span><div class="a" style="left:823px;top:862px;width:0;height:0;border-left:3px solid transparent;border-right:3px solid transparent;border-top:3px solid #222"></div><svg class="a" style="left:838px;top:854px" width="18" height="18" viewBox="0 0 18 18"><path d="M3.8 8 V1.8 H11 Q14 1.8 14 4.8 V8" fill="#f4fafe" stroke="#1e98de" stroke-width="1.5"/><path d="M5.5 3.5 V6.5 M8 3.5 V6.5" stroke="#9fd0f0" stroke-width="0.8"/><rect x="1" y="8" width="16" height="7.5" rx="2.2" fill="#eceef0" stroke="#777b80" stroke-width="1.3"/><path d="M3 11 H15" stroke="#a8a0b0" stroke-width="0.8"/><path d="M3.5 16.3 H14.5" stroke="#1e98de" stroke-width="1.6"/></svg><div class="a" style="left:863px;top:851px;width:1px;height:23px;background:#d0d6dc"></div><span class="tbt" style="left:871px;top:858px;color:#33404c">Layout</span><div class="a" style="left:913px;top:853px;width:131px;height:21px;background:#fff;border:1px solid #a9b1b9"></div><div class="a" style="left:1027px;top:854px;width:16px;height:19px;background:linear-gradient(#fbfbfc,#e6e9ec);border-left:1px solid #c8ced4"></div><div class="a" style="left:1032px;top:862px;width:0;height:0;border-left:3.5px solid transparent;border-right:3.5px solid transparent;border-top:3.5px solid #444"></div><span class="tbt" style="left:917px;top:859px;color:#111">Padrão</span><svg class="a" style="left:1053px;top:856px" width="18" height="17" viewBox="0 0 18 17"><rect x="1" y="1" width="12" height="12" fill="#eaf4fc" stroke="#2f8fd6" stroke-width="1.3"/><rect x="2.5" y="2.5" width="9" height="1.6" fill="#3cb84a"/><path d="M2.5 6 H11.5 M2.5 8.5 H11.5" stroke="#7ab0dc" stroke-width="0.9"/><rect x="7" y="7" width="10" height="9.5" rx="1" fill="#1d7ed0"/><rect x="9" y="8" width="6" height="3" fill="#fff"/><rect x="9" y="12.8" width="6" height="3" fill="#52c05a"/></svg><svg class="a" style="left:1080px;top:856px" width="17" height="17" viewBox="0 0 17 17"><rect x="1.5" y="1" width="8" height="11" fill="#eef5fb" stroke="#b8d4ec" stroke-width="1"/><path d="M6 5 H12 L15.5 8.5 V16 H6z" fill="#e8f2fa" stroke="#b0cce4" stroke-width="1"/></svg><svg class="a" style="left:1106px;top:856px" width="17" height="17" viewBox="0 0 17 17"><rect x="1" y="1" width="14" height="13" fill="#f2f9fe" stroke="#3a9ad8" stroke-width="1.5"/><rect x="3" y="2.8" width="10" height="1.5" fill="#36c060"/><path d="M3 6.3 H13 M3 8.6 H13 M3 10.9 H13" stroke="#9cc8ec" stroke-width="1"/><circle cx="13" cy="13" r="3.8" fill="#f15a1a"/><rect x="10.8" y="12.3" width="4.4" height="1.4" fill="#fff"/></svg><div class="a" style="left:1131px;top:852px;width:1px;height:23px;background:#d6dbe0"></div><svg class="a" style="left:1140px;top:856px" width="17" height="17" viewBox="0 0 17 17"><rect x="1" y="1" width="14" height="13" fill="#f2f9fe" stroke="#3a9ad8" stroke-width="1.5"/><rect x="3" y="2.8" width="10" height="1.5" fill="#36c060"/><path d="M3 6.3 H13 M3 8.6 H13 M3 10.9 H13" stroke="#9cc8ec" stroke-width="1"/></svg><svg class="a" style="left:1166px;top:856px" width="17" height="17" viewBox="0 0 17 17"><rect x="1" y="1" width="14" height="13" fill="#f2f9fe" stroke="#3a9ad8" stroke-width="1.5"/><rect x="3" y="2.8" width="10" height="1.5" fill="#36c060"/><path d="M3 6.3 H13 M3 8.6 H13 M3 10.9 H13" stroke="#9cc8ec" stroke-width="1"/><circle cx="13.5" cy="13.5" r="3.3" fill="#8a8f94"/><circle cx="13.5" cy="13.5" r="1.2" fill="#ddd"/></svg><div class="a" style="left:1192px;top:852px;width:1px;height:23px;background:#d0d6dc"></div><svg class="a" style="left:1200px;top:856px" width="17" height="17" viewBox="0 0 17 17"><rect x="1" y="1" width="14" height="13" fill="#f2f9fe" stroke="#3a9ad8" stroke-width="1.5"/><rect x="3" y="2.8" width="10" height="1.5" fill="#36c060"/><path d="M3 6.3 H13 M3 8.6 H13 M3 10.9 H13" stroke="#9cc8ec" stroke-width="1"/><rect x="3.5" y="7" width="4" height="1.6" fill="#d33"/><rect x="9" y="7" width="4" height="1.6" fill="#d33"/><rect x="8" y="11" width="4" height="1.6" fill="#2a2"/></svg><svg class="a" style="left:1226px;top:856px" width="17" height="17" viewBox="0 0 17 17"><rect x="1" y="1" width="14" height="13" fill="#f2f9fe" stroke="#3a9ad8" stroke-width="1.5"/><rect x="3" y="2.8" width="10" height="1.5" fill="#36c060"/><path d="M3 6.3 H13 M3 8.6 H13 M3 10.9 H13" stroke="#9cc8ec" stroke-width="1"/><path d="M5.5 6.5 H11 V8 H8 L10 10 L8 12 H11 V13.5 H5.5 L8 10z" fill="#333"/></svg><svg class="a" style="left:1253px;top:856px" width="17" height="17" viewBox="0 0 17 17"><rect x="1" y="1" width="14" height="13" fill="#f2f9fe" stroke="#3a9ad8" stroke-width="1.5"/><rect x="3" y="2.8" width="10" height="1.5" fill="#36c060"/><path d="M3 6.3 H13 M3 8.6 H13 M3 10.9 H13" stroke="#9cc8ec" stroke-width="1"/><path d="M9 1 L2 9 H6 L3 16 L12 7 H8z" fill="#f5b616"/></svg>
<div id="bline" class="a"></div><div id="bbar" class="a"></div>
<div class="btab" style="left:8px;width:72px"><span class="tt" style="left:24px">Sistema</span></div>
<div class="btab" style="left:84px;width:90px"><span class="tt" style="left:25px">Mensagens</span></div>
<svg class="a" style="left:17px;top:878px" width="14" height="16" viewBox="0 0 14 16"><rect x="0.5" y="0.5" width="13" height="10" fill="#d8d8d8" stroke="#b8b8b8"/><rect x="1.5" y="1.5" width="11" height="8" fill="#1a8ad2"/><rect x="5.5" y="11" width="3" height="2" fill="#c8c8c8"/><rect x="3" y="13" width="8" height="2.2" fill="#bdbdbd" stroke="#9a9a9a" stroke-width="0.6"/></svg>
<svg class="a" style="left:92px;top:878px" width="17" height="16" viewBox="0 0 17 16"><rect x="0.7" y="0.7" width="11" height="9" fill="#dff0fb" stroke="#3a9ae0" stroke-width="1.2"/><rect x="2.5" y="2.5" width="7" height="1.3" fill="#3a9ae0"/><path d="M5 6.5 H15.5 V12 H12 L14 15 L9.5 12 H5z" fill="#bfe3f7" stroke="#3aa0e0" stroke-width="1"/></svg>
<div id="teal" class="a"></div>
</body></html>
